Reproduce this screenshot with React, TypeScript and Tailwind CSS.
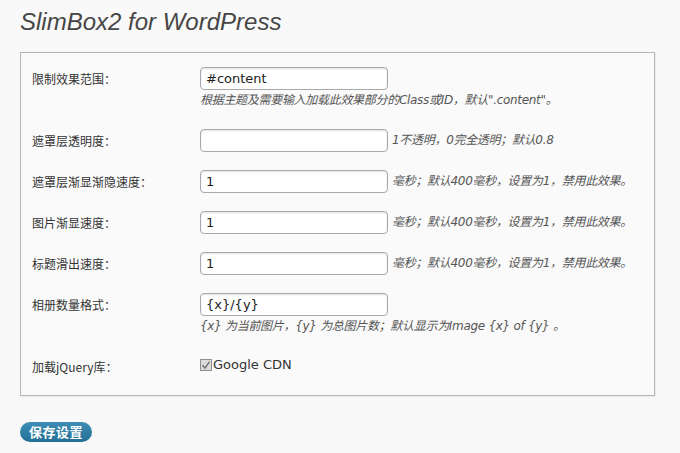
import React from "react";

const SANS = "font-['DejaVu_Sans','Noto_Sans_CJK_SC',sans-serif]";

type Row = {
  label: string;
  value?: string;
  side?: string;
  below?: React.ReactNode;
  checkbox?: string;
};

const ROWS: Row[] = [
  {
    label: "限制效果范围：",
    value: "#content",
    below: "根据主题及需要输入加载此效果部分的Class或ID，默认\".content\"。",
  },
  { label: "遮罩层透明度：", value: "", side: "1不透明，0完全透明；默认0.8" },
  { label: "遮罩层渐显渐隐速度：", value: "1", side: "毫秒；默认400毫秒，设置为1，禁用此效果。" },
  { label: "图片渐显速度：", value: "1", side: "毫秒；默认400毫秒，设置为1，禁用此效果。" },
  { label: "标题滑出速度：", value: "1", side: "毫秒；默认400毫秒，设置为1，禁用此效果。" },
  {
    label: "相册数量格式：",
    value: "{x}/{y}",
    below: "{x} 为当前图片，{y} 为总图片数；默认显示为Image {x} of {y} 。",
  },
  { label: "加载jQuery库：", checkbox: "Google CDN" },
];

function Field({ value }: { value: string }) {
  return (
    <div
      className={`w-[188px] h-[23px] shrink-0 rounded-[4px] border border-[#a9a9a9] bg-white shadow-[inset_0_1px_2px_rgba(0,0,0,0.12)] px-[5px] text-[13px] leading-[21px] text-[#222] ${SANS}`}
    >
      {value}
    </div>
  );
}

export default function App() {
  return (
    <div className="min-h-[453px] bg-[#f9f9f9] px-[20px] pt-[6px]">
      <h1 className="font-['Liberation_Sans',sans-serif] italic text-[24px] leading-[32px] text-[#464646]">
        SlimBox2 for WordPress
      </h1>

      <div className="mt-[14px] w-[635px] border border-[#b5b5b5] bg-[#fafafa] shadow-[1px_1px_1px_rgba(0,0,0,0.06)] pl-[11px] pt-[5px] pb-[8px]">
        {ROWS.map((row) => (
          <div key={row.label} className="flex items-start py-[9px]">
            <div className="w-[168px] h-[23px] shrink-0 text-[12px] leading-[23px] text-[#333] font-['Noto_Sans_CJK_SC',sans-serif]">
              {row.label}
            </div>
            <div className="flex flex-col">
              {row.checkbox ? (
                <div className="flex items-center h-[20px]">
                  <span className="flex items-center justify-center w-[12px] h-[12px] border border-[#8f8f8f] bg-[#dcdcdc]">
                    <svg width="10" height="10" viewBox="0 0 10 10">
                      <path d="M1.5 5.2 L4 8 L8.6 1.6" fill="none" stroke="#777" strokeWidth="1.6" />
                    </svg>
                  </span>
                  <span className={`ml-[1px] text-[13px] text-[#333] ${SANS}`}>{row.checkbox}</span>
                </div>
              ) : (
                <div className="flex items-center h-[23px]">
                  <Field value={row.value ?? ""} />
                  {row.side && (
                    <span className="ml-[4px] italic text-[12px] leading-[23px] text-[#555] font-['DejaVu_Sans','Noto_Sans_CJK_SC',sans-serif] tracking-[-0.3px]">
                      {row.side}
                    </span>
                  )}
                </div>
              )}
              {row.below && (
                <div className="italic text-[12px] leading-[21px] text-[#555] font-['DejaVu_Sans','Noto_Sans_CJK_SC',sans-serif] tracking-[-0.3px]">
                  {row.below}
                </div>
              )}
            </div>
          </div>
        ))}
      </div>

      <button className="mt-[26px] h-[20px] px-[9px] rounded-full bg-gradient-to-b from-[#3f8db5] to-[#236f95] text-white text-[13px] font-bold leading-[20px] tracking-[0.5px] font-['Noto_Sans_CJK_SC',serif]">
        保存设置
      </button>
    </div>
  );
}
